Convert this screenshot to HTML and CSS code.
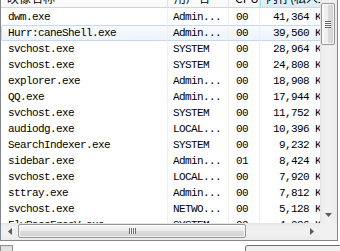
FILE: index.html
```html
<!DOCTYPE html>
<html lang="zh-CN">
<head>
<meta charset="utf-8">
<title>进程</title>
<link rel="stylesheet" href="styles.css">
</head>
<body>
<div class="window">
  <div class="list">
    <div class="content">
      <div class="header">
        <div class="hcell">映像名称</div>
        <div class="hcell">用户名</div>
        <div class="hcell">CPU</div>
        <div class="hcell sorted">内存(私人工作集)</div>
      </div>
      <div class="rows">
        <div class="row"><span class="cell">dwm.exe</span><span class="cell user">Admin...</span><span class="cell cpu">00</span><span class="cell mem">41,364 K</span></div>
        <div class="row hover"><span class="cell">Hurr:caneShell.exe</span><span class="cell user">Admin...</span><span class="cell cpu">00</span><span class="cell mem">39,560 K</span></div>
        <div class="row"><span class="cell">svchost.exe</span><span class="cell user">SYSTEM</span><span class="cell cpu">00</span><span class="cell mem">28,964 K</span></div>
        <div class="row"><span class="cell">svchost.exe</span><span class="cell user">SYSTEM</span><span class="cell cpu">00</span><span class="cell mem">24,808 K</span></div>
        <div class="row"><span class="cell">explorer.exe</span><span class="cell user">Admin...</span><span class="cell cpu">00</span><span class="cell mem">18,908 K</span></div>
        <div class="row"><span class="cell">QQ.exe</span><span class="cell user">Admin...</span><span class="cell cpu">00</span><span class="cell mem">17,944 K</span></div>
        <div class="row"><span class="cell">svchost.exe</span><span class="cell user">SYSTEM</span><span class="cell cpu">00</span><span class="cell mem">11,752 K</span></div>
        <div class="row"><span class="cell">audiodg.exe</span><span class="cell user">LOCAL...</span><span class="cell cpu">00</span><span class="cell mem">10,396 K</span></div>
        <div class="row"><span class="cell">SearchIndexer.exe</span><span class="cell user">SYSTEM</span><span class="cell cpu">00</span><span class="cell mem">9,232 K</span></div>
        <div class="row"><span class="cell">sidebar.exe</span><span class="cell user">Admin...</span><span class="cell cpu">01</span><span class="cell mem">8,424 K</span></div>
        <div class="row"><span class="cell">svchost.exe</span><span class="cell user">LOCAL...</span><span class="cell cpu">00</span><span class="cell mem">7,920 K</span></div>
        <div class="row"><span class="cell">sttray.exe</span><span class="cell user">Admin...</span><span class="cell cpu">00</span><span class="cell mem">7,812 K</span></div>
        <div class="row"><span class="cell">svchost.exe</span><span class="cell user">NETWO...</span><span class="cell cpu">00</span><span class="cell mem">5,128 K</span></div>
        <div class="row"><span class="cell">FlyPassFreeV.exe</span><span class="cell user">SYSTEM</span><span class="cell cpu">00</span><span class="cell mem">4,036 K</span></div>
      </div>
    </div>
    <div class="vscroll">
      <div class="vthumb"><span class="vgrip"></span></div>
      <div class="spacer"></div>
      <div class="sbtn">
        <svg width="7" height="4" viewBox="0 0 7 4"><polygon points="0,0 7,0 3.5,4" fill="#5a5a5a"/></svg>
      </div>
    </div>
    <div class="hscroll">
      <div class="sbtn">
        <svg width="4" height="7" viewBox="0 0 4 7"><polygon points="4,0 4,7 0,3.5" fill="#5a5a5a"/></svg>
      </div>
      <div class="hthumb"><span class="hgrip"></span></div>
      <div class="spacer"></div>
      <div class="sbtn">
        <svg width="4" height="7" viewBox="0 0 4 7"><polygon points="0,0 0,7 4,3.5" fill="#5a5a5a"/></svg>
      </div>
    </div>
    <div class="corner"></div>
  </div>
  <div class="footer">
    <div class="chk"></div>
    <div class="btn"></div>
  </div>
</div>
</body>
</html>
```

FILE: styles.css
```css
* {
  box-sizing: border-box;
}

html,
body {
  margin: 0;
  padding: 0;
}

body {
  width: 340px;
  height: 251px;
  overflow: hidden;
  background: #ffffff;
  color: #000000;
  font-family: "Liberation Mono", "DejaVu Sans Mono", monospace;
  font-size: 11px;
}

.window {
  display: flex;
  flex-direction: column;
  width: 340px;
  height: 251px;
  overflow: hidden;
}

.list {
  display: grid;
  grid-template-columns: 319px 17px;
  grid-template-rows: 223px 17px;
  width: 338px;
  height: 241px;
  border: 1px solid #828790;
  border-top: none;
  flex: none;
}

.content {
  overflow: hidden;
  background: #ffffff;
}

.header {
  display: grid;
  grid-template-columns: 167px 61px 31px 67px;
  width: 326px;
  height: 24px;
  margin-top: -16px;
  border-bottom: 1px solid #d5d5d5;
  background: linear-gradient(#ffffff, #ffffff 50%, #f7f8f9);
  font-family: "Noto Sans CJK SC", sans-serif;
  font-size: 12px;
  line-height: 12px;
  color: #000000;
}

.hcell {
  display: flex;
  align-items: flex-end;
  padding: 0 0 3px 6px;
  border-right: 1px solid #e3e4e6;
  white-space: nowrap;
  overflow: hidden;
}

.hcell.sorted {
  background: linear-gradient(#f2fafe, #e2f3fc 60%, #d6eefa);
  border-left: 1px solid #a8d8f2;
  border-right: 1px solid #a8d8f2;
  padding-left: 5px;
}

.rows {
  width: 406px;
  padding-top: 1px;
}

.row {
  display: grid;
  grid-template-columns: 167px 61px 31px 67px 1fr;
  height: 16px;
  line-height: 16px;
  border-radius: 2px;
}

.row.hover {
  background: linear-gradient(#fafbfd, #ebf3fd);
  box-shadow: inset 0 0 0 1px #c3d9f3;
}

.cell {
  padding-left: 7px;
  letter-spacing: -0.6px;
  white-space: nowrap;
  overflow: hidden;
  border-right: 1px solid #f0f0f0;
}

.cell.user {
  padding-left: 5px;
}

.cell.mem {
  padding-left: 0;
  padding-right: 6px;
  text-align: right;
  border-right: none;
}

.vscroll {
  display: flex;
  flex-direction: column;
  background: linear-gradient(to right, #e2e2e2, #eeeeee 2px, #f1f1f1 50%, #ececec);
}

.vthumb {
  flex: none;
  height: 42px;
  margin: 3px 2px 0 1px;
  border: 1px solid #979797;
  border-radius: 2px;
  background: linear-gradient(to right, #f7f7f7, #ececec 50%, #dcdcdc 50%, #d2d2d2);
  box-shadow: inset 0 0 0 1px rgba(255, 255, 255, 0.7);
  display: flex;
  align-items: center;
  justify-content: center;
}

.vgrip {
  width: 6px;
  height: 7px;
  background: repeating-linear-gradient(to bottom, #6a6a6a 0 1px, #fafafa 1px 2px);
}

.spacer {
  flex: 1;
}

.sbtn {
  flex: none;
  width: 17px;
  height: 17px;
  display: flex;
  align-items: center;
  justify-content: center;
}

.sbtn svg {
  display: block;
}

.hscroll {
  display: flex;
  background: linear-gradient(#e2e2e2, #eeeeee 2px, #f1f1f1 50%, #ececec);
}

.hthumb {
  flex: none;
  width: 228px;
  margin: 1px 0 2px 0;
  border: 1px solid #979797;
  border-radius: 2px;
  background: linear-gradient(#f7f7f7, #ececec 50%, #dcdcdc 50%, #d2d2d2);
  box-shadow: inset 0 0 0 1px rgba(255, 255, 255, 0.7);
  display: flex;
  align-items: center;
  justify-content: center;
}

.hgrip {
  width: 7px;
  height: 6px;
  background: repeating-linear-gradient(to right, #6a6a6a 0 1px, #fafafa 1px 2px);
}

.corner {
  background: #f0f0f0;
}

.footer {
  flex: none;
  height: 10px;
  overflow: hidden;
  display: flex;
  align-items: flex-start;
  padding-top: 4px;
}

.chk {
  flex: none;
  width: 13px;
  height: 13px;
  border: 1px solid #8e8f8f;
  background: linear-gradient(#dcdcdc, #f2f2f2);
}

.btn {
  flex: none;
  width: 100px;
  height: 23px;
  margin-left: auto;
  margin-right: -5px;
  border: 1px solid #707070;
  border-radius: 3px;
  background: linear-gradient(#f2f2f2, #ebebeb 50%, #dddddd 50%, #cfcfcf);
}
```
